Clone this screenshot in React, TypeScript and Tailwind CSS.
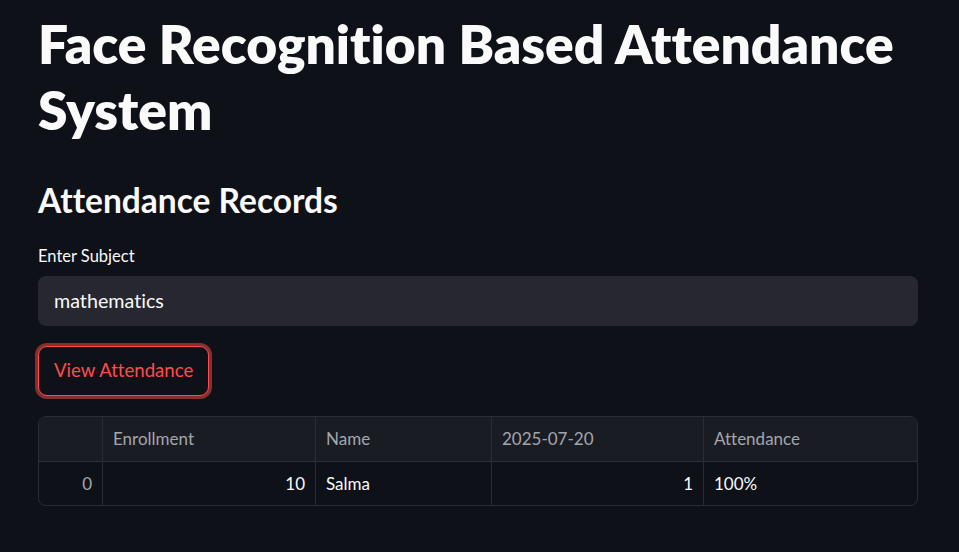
const columns = [
  { name: "", width: "w-[64px]" },
  { name: "Enrollment", width: "w-[213px]" },
  { name: "Name", width: "w-[176px]" },
  { name: "2025-07-20", width: "w-[212px]" },
  { name: "Attendance", width: "flex-1" },
];

export default function App() {
  return (
    <div className="min-h-screen bg-[#0e1117] pl-[38px] pr-[41px] pt-[10px] font-['Lato','Noto_Sans',sans-serif] text-[#fafafa] [font-variant-ligatures:none]">
      <h1 className="text-[53.3px] font-extrabold leading-[66px]">
        Face Recognition Based Attendance System
      </h1>

      <h2 className="mt-[36px] text-[33.5px] font-bold leading-[44px]">Attendance Records</h2>

      <div className="mt-[24px] text-[16.5px] leading-[20px]">Enter Subject</div>
      <div className="mt-[10px] flex h-[50px] items-center rounded-lg bg-[#262730] px-4 text-[19.7px]">
        mathematics
      </div>

      <button className="mt-[20px] flex h-[50px] items-center rounded-[9px] border border-[#ff4b4b] bg-[#0e1117] px-[15px] text-[18.6px] text-[#ff4b4b] shadow-[0_0_0_3px_rgba(255,75,75,0.5)]">
        View Attendance
      </button>

      <div className="mt-[20px] overflow-hidden rounded-lg border border-[#2b2d34] text-[17px]">
        <div className="flex h-[44px] bg-[#1a1c24] text-[#a3a6ad]">
          {columns.map((c, i) => (
            <div
              key={i}
              className={`${c.width} flex items-center px-[10px] ${i < columns.length - 1 ? "border-r border-[#2b2d34]" : ""}`}
            >
              {c.name}
            </div>
          ))}
        </div>
        <div className="flex h-[44px] border-t border-[#2b2d34]">
          <div className="flex w-[64px] items-center justify-end border-r border-[#2b2d34] px-[10px] text-[#a3a6ad]">0</div>
          <div className="flex w-[213px] items-center justify-end border-r border-[#2b2d34] px-[10px]">10</div>
          <div className="flex w-[176px] items-center border-r border-[#2b2d34] px-[10px]">Salma</div>
          <div className="flex w-[212px] items-center justify-end border-r border-[#2b2d34] px-[10px]">1</div>
          <div className="flex flex-1 items-center px-[10px]">100%</div>
        </div>
      </div>
    </div>
  );
}
